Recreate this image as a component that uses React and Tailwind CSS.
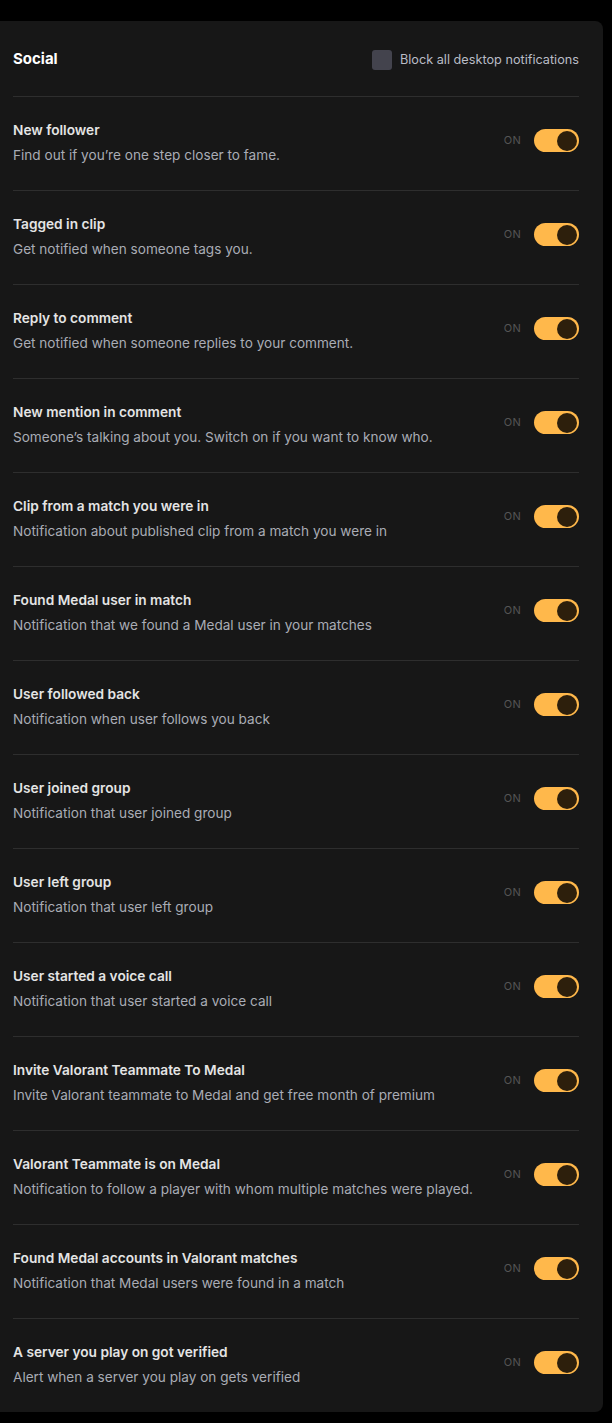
import React from "react";

const items = [
  ["New follower", "Find out if you’re one step closer to fame."],
  ["Tagged in clip", "Get notified when someone tags you."],
  ["Reply to comment", "Get notified when someone replies to your comment."],
  ["New mention in comment", "Someone’s talking about you. Switch on if you want to know who."],
  ["Clip from a match you were in", "Notification about published clip from a match you were in"],
  ["Found Medal user in match", "Notification that we found a Medal user in your matches"],
  ["User followed back", "Notification when user follows you back"],
  ["User joined group", "Notification that user joined group"],
  ["User left group", "Notification that user left group"],
  ["User started a voice call", "Notification that user started a voice call"],
  ["Invite Valorant Teammate To Medal", "Invite Valorant teammate to Medal and get free month of premium"],
  ["Valorant Teammate is on Medal", "Notification to follow a player with whom multiple matches were played."],
  ["Found Medal accounts in Valorant matches", "Notification that Medal users were found in a match"],
  ["A server you play on got verified", "Alert when a server you play on gets verified"],
];

function Toggle() {
  return (
    <div className="flex items-center gap-[13px] mt-[32px]">
      <span className="text-[11px] text-[#555] tracking-wide">ON</span>
      <div className="w-[45px] h-[23px] rounded-full bg-[#ffb84b] flex items-center justify-end pr-[2px]">
        <div className="w-[20px] h-[20px] rounded-full bg-[#2d1f0c]" />
      </div>
    </div>
  );
}

export default function App() {
  return (
    <div className="bg-black min-h-[1423px] pt-[21px] pr-[9px]" style={{ fontFamily: "Inter, 'Noto Sans', sans-serif" }}>
      <div className="bg-[#171717] rounded-r-lg pl-[13px] pr-[24px] h-[1391px]">
        <div className="flex items-center justify-between h-[75px] pt-[2px]">
          <h2 className="text-[15px] font-bold text-white">Social</h2>
          <label className="flex items-center gap-[8px]">
            <span className="w-[20px] h-[20px] rounded-[3px] bg-[#43434d]" />
            <span className="text-[12.7px] text-[#b9bcc6]">Block all desktop notifications</span>
          </label>
        </div>
        {items.map(([t, d]) => (
          <div key={t} className="border-t border-[#2e2e2e] h-[94px] flex items-start justify-between">
            <div className="flex flex-col gap-[5px] pt-[23px]">
              <div className="text-[13.7px] font-semibold text-[#e4e4e4] leading-[20px]">{t}</div>
              <div className="text-[13.6px] text-[#a9acb5] leading-[20px]">{d}</div>
            </div>
            <Toggle />
          </div>
        ))}
      </div>
    </div>
  );
}
